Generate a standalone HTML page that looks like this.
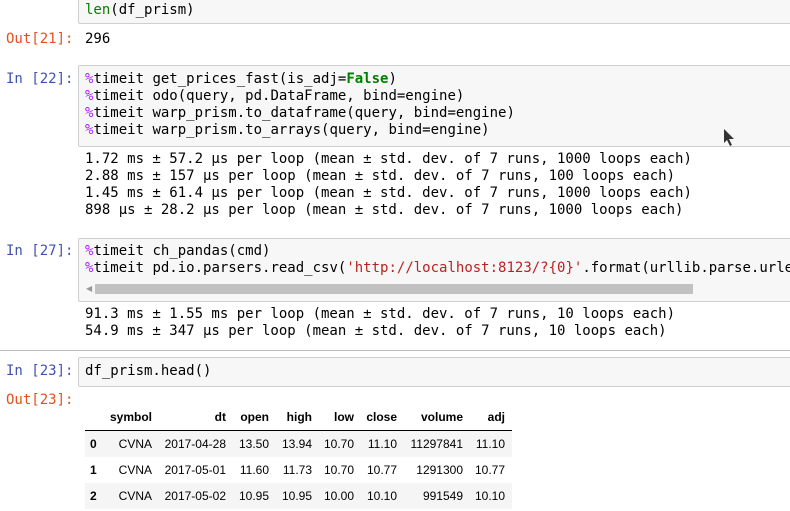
<!DOCTYPE html>
<html><head><meta charset="utf-8"><style>
body{margin:0;width:790px;height:511px;overflow:hidden;background:#fff;position:relative;font-family:"DejaVu Sans Mono","Liberation Mono",monospace;font-size:14px;}
.a{position:absolute;white-space:pre;line-height:17px;}
.box{position:absolute;left:78px;right:-5px;background:#f7f7f7;border:1px solid #cfcfcf;border-radius:2px;}
.pi{color:#3f51b5;}
.po{color:#e6501e;}
.m{color:#aa22ff;}
.k{color:#008000;font-weight:bold;}
.s{color:#ba2121;}
.b{color:#008000;}
table{position:absolute;left:85px;top:404px;border-collapse:collapse;font-family:"Liberation Sans",Arial,sans-serif;font-size:12px;color:#000;}
td,th{height:26px;padding:0;text-align:right;}
th{font-weight:bold;}
thead th{height:26px;border-bottom:1px solid #000;}
tbody tr:nth-child(odd){background:#f5f5f5;}
</style></head><body>
<div class="box" style="top:-5px;height:27px;"></div>
<div class="a" style="left:85px;top:2px;"><span class="b">len</span>(df_prism)</div>
<div class="a po" style="left:6px;top:31px;">Out[21]:</div>
<div class="a" style="left:85px;top:31px;">296</div>

<div class="box" style="top:65px;height:80px;"></div>
<div class="a pi" style="left:6px;top:71px;">In [22]:</div>
<div class="a" style="left:85px;top:71px;"><span class="m">%</span>timeit get_prices_fast(is_adj=<span class="k">False</span>)
<span class="m">%</span>timeit odo(query, pd.DataFrame, bind=engine)
<span class="m">%</span>timeit warp_prism.to_dataframe(query, bind=engine)
<span class="m">%</span>timeit warp_prism.to_arrays(query, bind=engine)</div>
<svg style="position:absolute;left:722px;top:128px" width="14" height="20"><path d="M2 1 L2 15 L5 12 L8 18 L10 17 L7 11 L12 11 Z" fill="#333"/></svg>
<div class="a" style="left:85px;top:151px;">1.72 ms ± 57.2 µs per loop (mean ± std. dev. of 7 runs, 1000 loops each)
2.88 ms ± 157 µs per loop (mean ± std. dev. of 7 runs, 100 loops each)
1.45 ms ± 61.4 µs per loop (mean ± std. dev. of 7 runs, 1000 loops each)
898 µs ± 28.2 µs per loop (mean ± std. dev. of 7 runs, 1000 loops each)</div>

<div class="box" style="top:238px;height:62px;"></div>
<div class="a pi" style="left:6px;top:243px;">In [27]:</div>
<div class="a" style="left:85px;top:243px;"><span class="m">%</span>timeit ch_pandas(cmd)
<span class="m">%</span>timeit pd.io.parsers.read_csv(<span class="s">'http://localhost:8123/?{0}'</span>.format(urllib.parse.urle</div>
<div style="position:absolute;left:86px;top:284px;font-size:8px;color:#999;line-height:9px;font-family:'DejaVu Sans',sans-serif;">◀</div>
<div style="position:absolute;left:95px;top:284px;width:598px;height:10px;background:#c1c1c1;"></div>
<div class="a" style="left:85px;top:306px;">91.3 ms ± 1.55 ms per loop (mean ± std. dev. of 7 runs, 10 loops each)
54.9 ms ± 347 µs per loop (mean ± std. dev. of 7 runs, 10 loops each)</div>

<div style="position:absolute;left:0;right:0;top:350px;height:1px;background:#bdbdbd;"></div>
<div class="box" style="top:357px;height:28px;"></div>
<div class="a pi" style="left:6px;top:363px;">In [23]:</div>
<div class="a" style="left:85px;top:363px;">df_prism.head()</div>
<div class="a po" style="left:6px;top:392px;">Out[23]:</div>

<table>
<colgroup><col style="width:20px"><col style="width:47px"><col style="width:74px"><col style="width:43px"><col style="width:43px"><col style="width:42px"><col style="width:43px"><col style="width:66px"><col style="width:42px"><col style="width:7px"></colgroup>
<thead><tr><th></th><th>symbol</th><th>dt</th><th>open</th><th>high</th><th>low</th><th>close</th><th>volume</th><th>adj</th><th></th></tr></thead>
<tbody>
<tr><th style="text-align:left;padding-left:5px">0</th><td>CVNA</td><td>2017-04-28</td><td>13.50</td><td>13.94</td><td>10.70</td><td>11.10</td><td>11297841</td><td>11.10</td><td></td></tr>
<tr><th style="text-align:left;padding-left:5px">1</th><td>CVNA</td><td>2017-05-01</td><td>11.60</td><td>11.73</td><td>10.70</td><td>10.77</td><td>1291300</td><td>10.77</td><td></td></tr>
<tr><th style="text-align:left;padding-left:5px">2</th><td>CVNA</td><td>2017-05-02</td><td>10.95</td><td>10.95</td><td>10.00</td><td>10.10</td><td>991549</td><td>10.10</td><td></td></tr>
</tbody></table>
</body></html>
